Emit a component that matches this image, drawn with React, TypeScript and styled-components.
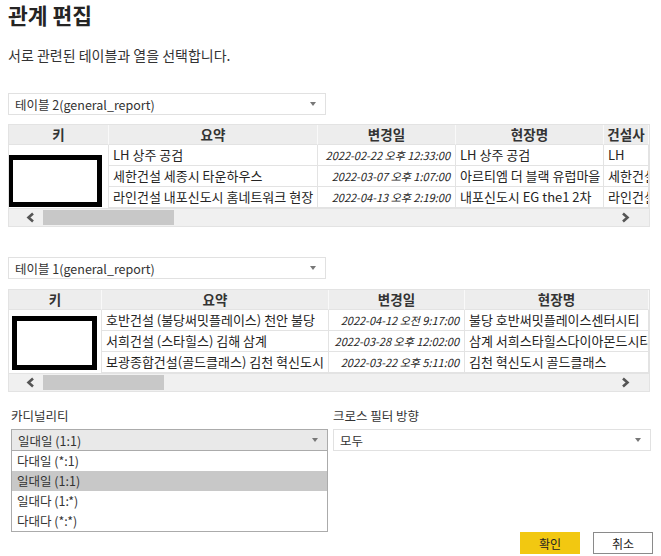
import React from 'react';
import styled, { createGlobalStyle } from 'styled-components';

const GlobalStyle = createGlobalStyle`
  html, body { margin: 0; padding: 0; background: #fff; }
  body { font-family: "Noto Sans CJK KR", "Noto Sans", sans-serif; color: #252423; }
  * { box-sizing: border-box; }
`;

const Page = styled.div`
  width: 661px;
  height: 556px;
  overflow: hidden;
  padding: 0 8px 0 8px;
`;

const Title = styled.h1`
  margin: 0;
  font-size: 21.5px;
  font-weight: 700;
  line-height: 30px;
  height: 30px;
  color: #252423;
`;

const Subtitle = styled.p`
  margin: 15px 0 0;
  font-size: 14px;
  line-height: 20px;
  color: #333;
`;

const Select = styled.div<{ $active?: boolean; $width?: number; $mt?: number }>`
  width: ${p => (p.$width ? `${p.$width}px` : '100%')};
  height: 22px;
  margin-top: ${p => p.$mt ?? 0}px;
  border: 1px solid ${p => (p.$active ? '#ababab' : '#e1e1e1')};
  background: ${p => (p.$active ? '#e9e9e9' : '#fff')};
  display: flex;
  align-items: center;
  justify-content: space-between;
  padding: 0 9px 0 6px;
  font-size: 12.5px;
  color: #333;
  white-space: nowrap;
`;

const Caret = styled.span`
  width: 0;
  height: 0;
  border-left: 3.5px solid transparent;
  border-right: 3.5px solid transparent;
  border-top: 4px solid #777;
`;

const TableFrame = styled.div<{ $mt: number }>`
  position: relative;
  width: 642px;
  margin-top: ${p => p.$mt}px;
  border: 1px solid #e3e3e3;
  overflow: hidden;
`;

const Grid = styled.div<{ $cols: string }>`
  display: grid;
  grid-template-columns: ${p => p.$cols};
  grid-template-rows: 20px repeat(3, 21px);
  width: max-content;
`;

const HeadCell = styled.div`
  background: #ededed;
  border-right: 1px solid #f9f9f9;
  border-bottom: 1px solid #e3e3e3;
  font-size: 13.5px;
  font-weight: 700;
  color: #333;
  text-align: center;
  line-height: 19px;
  white-space: nowrap;
  overflow: hidden;
`;

const Cell = styled.div<{ $date?: boolean }>`
  border-right: 1px solid #e3e3e3;
  border-bottom: 1px solid #e3e3e3;
  font-size: ${p => (p.$date ? '11px' : '13px')};
  font-style: ${p => (p.$date ? 'italic' : 'normal')};
  text-align: ${p => (p.$date ? 'right' : 'left')};
  padding: 0 ${p => (p.$date ? '5px' : '4px')};
  line-height: 20px;
  color: #252423;
  white-space: nowrap;
  overflow: hidden;
`;

const KeyCell = styled.div`
  border-right: 1px solid #e3e3e3;
  background: #fff;
`;

const Redaction = styled.div<{ $l: number; $t: number; $w: number; $h: number }>`
  position: absolute;
  left: ${p => p.$l}px;
  top: ${p => p.$t}px;
  width: ${p => p.$w}px;
  height: ${p => p.$h}px;
  border: 5px solid #000;
  background: #fff;
`;

const ScrollBar = styled.div`
  height: 18px;
  background: #f0f0f0;
  display: flex;
  align-items: stretch;
  border-top: 1px solid #e3e3e3;
`;

const ArrowBtn = styled.div<{ $side: 'left' | 'right' }>`
  width: 34px;
  display: flex;
  align-items: center;
  justify-content: ${p => (p.$side === 'left' ? 'flex-end' : 'flex-start')};
  padding: ${p => (p.$side === 'left' ? '0 8px 0 0' : '0 0 0 6px')};
`;

const Thumb = styled.div<{ $w: number }>`
  width: ${p => p.$w}px;
  background: #c8c8c8;
  margin: 1px 0 1px;
`;

const Spacer = styled.div`
  flex: 1;
`;

const Bottom = styled.div`
  display: grid;
  grid-template-columns: 317px 318px;
  column-gap: 5px;
  margin-top: 12px;
  padding-left: 3px;
`;

const Field = styled.div`
  position: relative;
`;

const Label = styled.div`
  font-size: 12.5px;
  line-height: 24px;
  height: 24px;
  color: #333;
  margin-bottom: 1px;
`;

const Menu = styled.div`
  position: absolute;
  left: 0;
  right: 0;
  top: 47px;
  border: 1px solid #ababab;
  border-top: none;
  background: #fff;
  z-index: 2;
`;

const MenuItem = styled.div<{ $selected?: boolean }>`
  height: 20px;
  line-height: 20px;
  padding-left: 5px;
  font-size: 12.5px;
  color: #333;
  background: ${p => (p.$selected ? '#c8c8c8' : 'transparent')};
`;

const Footer = styled.div`
  display: flex;
  justify-content: flex-end;
  gap: 13px;
  margin-top: 81px;
`;

const Button = styled.button<{ $primary?: boolean }>`
  width: 60px;
  height: 22px;
  font-family: inherit;
  font-size: 12px;
  color: #252423;
  background: ${p => (p.$primary ? '#f2c811' : '#fff')};
  border: 1px solid ${p => (p.$primary ? '#f2c811' : '#8a8a8a')};
  padding: 0;
  cursor: pointer;
`;

const Chevron = ({ dir }: { dir: 'left' | 'right' }) => (
  <svg width="9" height="11" viewBox="0 0 9 11">
    <polyline
      points={dir === 'left' ? '7,1.5 2.5,5.5 7,9.5' : '2,1.5 6.5,5.5 2,9.5'}
      fill="none"
      stroke="#555"
      strokeWidth="2.6"
    />
  </svg>
);

type Row = string[];

interface TableProps {
  cols: string;
  headers: string[];
  rows: Row[];
  mt: number;
  thumb: number;
  red: { l: number; t: number; w: number; h: number };
}

const DataTable = ({ cols, headers, rows, mt, thumb, red }: TableProps) => (
  <TableFrame $mt={mt}>
    <Grid $cols={cols}>
      {headers.map(h => (
        <HeadCell key={h}>{h}</HeadCell>
      ))}
      {rows.map((r, i) => (
        <React.Fragment key={i}>
          <KeyCell />
          {r.map((c, j) => (
            <Cell key={j} $date={j === 1}>
              {c}
            </Cell>
          ))}
        </React.Fragment>
      ))}
    </Grid>
    <ScrollBar>
      <ArrowBtn $side="left">
        <Chevron dir="left" />
      </ArrowBtn>
      <Thumb $w={thumb} />
      <Spacer />
      <ArrowBtn $side="right">
        <Chevron dir="right" />
      </ArrowBtn>
    </ScrollBar>
    <Redaction $l={red.l} $t={red.t} $w={red.w} $h={red.h} />
  </TableFrame>
);

const table1: Row[] = [
  ['LH 상주 공검', '2022-02-22 오후 12:33:00', 'LH 상주 공검', 'LH'],
  ['세한건설 세종시 타운하우스', '2022-03-07 오후 1:07:00', '아르티엠 더 블랙 유럽마을', '세한건설'],
  ['라인건설 내포신도시 홈네트워크 현장', '2022-04-13 오후 2:19:00', '내포신도시 EG the1 2차', '라인건설'],
];

const table2: Row[] = [
  ['호반건설 (불당써밋플레이스) 천안 불당', '2022-04-12 오전 9:17:00', '불당 호반써밋플레이스센터시티'],
  ['서희건설 (스타힐스) 김해 삼계', '2022-03-28 오후 12:02:00', '삼계 서희스타힐스다이아몬드시티'],
  ['보광종합건설(골드클래스) 김천 혁신도시', '2022-03-22 오후 5:11:00', '김천 혁신도시 골드클래스'],
];

export default function App() {
  return (
    <>
      <GlobalStyle />
      <Page>
        <Title>관계 편집</Title>
        <Subtitle>서로 관련된 테이블과 열을 선택합니다.</Subtitle>

        <Select $width={318} $mt={28}>
          테이블 2(general_report)
          <Caret />
        </Select>
        <DataTable
          mt={9}
          cols="100px 209px 138px 148px 45px"
          headers={['키', '요약', '변경일', '현장명', '건설사']}
          rows={table1}
          thumb={131}
          red={{ l: -1, t: 30, w: 94, h: 52 }}
        />

        <Select $width={318} $mt={30}>
          테이블 1(general_report)
          <Caret />
        </Select>
        <DataTable
          mt={10}
          cols="93px 227px 136px 184px"
          headers={['키', '요약', '변경일', '현장명']}
          rows={table2}
          thumb={121}
          red={{ l: 3, t: 26, w: 85, h: 54 }}
        />

        <Bottom>
          <Field>
            <Label>카디널리티</Label>
            <Select $active>
              일대일 (1:1)
              <Caret />
            </Select>
            <Menu>
              <MenuItem>다대일 (*:1)</MenuItem>
              <MenuItem $selected>일대일 (1:1)</MenuItem>
              <MenuItem>일대다 (1:*)</MenuItem>
              <MenuItem>다대다 (*:*)</MenuItem>
            </Menu>
          </Field>
          <Field>
            <Label>크로스 필터 방향</Label>
            <Select>
              모두
              <Caret />
            </Select>
          </Field>
        </Bottom>

        <Footer>
          <Button $primary>확인</Button>
          <Button>취소</Button>
        </Footer>
      </Page>
    </>
  );
}
